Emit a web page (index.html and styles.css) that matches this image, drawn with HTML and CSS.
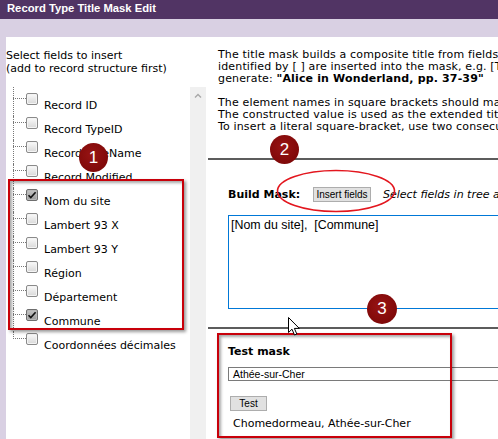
FILE: index.html
```html
<!DOCTYPE html>
<html>
<head>
<meta charset="utf-8">
<title>Record Type Title Mask Edit</title>
<link rel="stylesheet" href="styles.css">
</head>
<body>
<div class="app">
  <div class="titlebar">Record Type Title Mask Edit</div>
  <div class="band"></div>
  <div class="main">
    <div class="left">
      <p class="hint">Select fields to insert<br>(add to record structure first)</p>
      <ul class="tree">
        <li class="node"><span class="cb"></span><span class="lbl">Record ID</span></li>
        <li class="node"><span class="cb"></span><span class="lbl">Record TypeID</span></li>
        <li class="node"><span class="cb"></span><span class="lbl">Record TitleName</span></li>
        <li class="node"><span class="cb"></span><span class="lbl">Record Modified</span></li>
        <li class="node"><span class="cb checked"><svg viewBox="0 0 10 10" width="10" height="10"><path d="M1.5 5.2 L3.8 7.6 L8.6 2.2" fill="none" stroke="#111" stroke-width="1.6"/></svg></span><span class="lbl">Nom du site</span></li>
        <li class="node"><span class="cb"></span><span class="lbl">Lambert 93 X</span></li>
        <li class="node"><span class="cb"></span><span class="lbl">Lambert 93 Y</span></li>
        <li class="node"><span class="cb"></span><span class="lbl">Région</span></li>
        <li class="node"><span class="cb"></span><span class="lbl">Département</span></li>
        <li class="node"><span class="cb checked"><svg viewBox="0 0 10 10" width="10" height="10"><path d="M1.5 5.2 L3.8 7.6 L8.6 2.2" fill="none" stroke="#111" stroke-width="1.6"/></svg></span><span class="lbl">Commune</span></li>
        <li class="node last"><span class="cb"></span><span class="lbl">Coordonnées décimales</span></li>
      </ul>
    </div>
    <div class="scroll"><svg class="arrow" viewBox="0 0 8 5" width="8" height="5"><path d="M1 4.5 L4 1.5 L7 4.5" fill="none" stroke="#a8a8a8" stroke-width="1.4"/></svg></div>
    <div class="right">
      <div class="help">
        <p>The title mask builds a composite title from fields in the record. Field names<br>identified by [ ] are inserted into the mask, e.g. [Title], pp. [Start page]-[End page] will<br>generate: <b>"Alice in Wonderland, pp. 37-39"</b></p>
        <p>The element names in square brackets should match the field names in the record type.<br>The constructed value is used as the extended title of the record.<br>To insert a literal square-bracket, use two consecutive brackets [[ or ]].</p>
      </div>
      <div class="rule"></div>
      <div class="build">
        <div class="buildrow">
          <b class="buildlbl">Build Mask:</b>
          <button class="btn insert">Insert fields</button>
          <i class="tip">Select fields in tree and click Insert fields</i>
        </div>
        <div class="mask">[Nom du site],&nbsp; [Commune]</div>
      </div>
      <div class="rule"></div>
      <div class="test">
        <b class="testlbl">Test mask</b>
        <div class="testinput">Athée-sur-Cher</div>
        <button class="btn testbtn">Test</button>
        <div class="result">Chomedormeau, Athée-sur-Cher</div>
      </div>
    </div>
  </div>

  <div class="redbox box1"></div>
  <div class="redbox box3"></div>
  <svg class="ellipse" width="124" height="46" viewBox="0 0 124 46"><ellipse cx="62" cy="23" rx="58.5" ry="20.5" fill="none" stroke="#e3161e" stroke-width="1.6"/></svg>
  <div class="num n1">1</div>
  <div class="num n2">2</div>
  <div class="num n3">3</div>
  <svg class="cursor" width="13" height="20" viewBox="0 0 13 20"><path d="M0.5 0.5 L0.5 15.5 L4 12.2 L6.5 18 L8.8 17 L6.4 11.4 L11.3 11.4 Z" fill="#fff" stroke="#000" stroke-width="1" stroke-linejoin="miter"/></svg>
</div>
</body>
</html>
```

FILE: styles.css
```css
* { box-sizing: border-box; }
html, body { margin: 0; padding: 0; }
body {
  width: 498px;
  height: 439px;
  overflow: hidden;
  background: #d9d0e3;
  font-family: "DejaVu Sans", Verdana, sans-serif;
  font-size: 11px;
  color: #000;
}
.app { position: relative; width: 498px; height: 439px; overflow: hidden; }
.titlebar {
  height: 19px;
  background: #513464;
  color: #fff;
  font: bold 11.25px/16px "Liberation Sans", Arial, sans-serif;
  padding-left: 7px;
}
.band { height: 18px; }
.main {
  margin-left: 6px;
  height: 402px;
  background: #fff;
  display: flex;
}
.left { width: 184px; flex: none; }
.hint { margin: 0; padding-top: 12px; line-height: 13px; }
.tree { list-style: none; margin: 17px 0 0; padding: 0; }
.node {
  position: relative;
  height: 24px;
  display: flex;
  align-items: flex-start;
  padding-left: 20px;
}
.node::before {
  content: "";
  position: absolute;
  left: 7px;
  top: 6px;
  width: 13px;
  border-top: 1px dotted #777;
}
.node::after {
  content: "";
  position: absolute;
  left: 7px;
  top: 0;
  height: 24px;
  border-left: 1px dotted #777;
}
.node:first-child::after { top: -5px; height: 29px; }
.node.last::after { height: 7px; }
.cb {
  margin-top: 1px;
  width: 12px;
  height: 12px;
  flex: none;
  border: 1px solid #8a8a8a;
  border-radius: 2px;
  background: linear-gradient(#fafafa, #d8d8d8);
  box-shadow: inset 0 0 0 1px #f4f4f4;
  display: flex;
  align-items: center;
  justify-content: center;
}
.cb.checked {
  background: linear-gradient(#c4c4c4, #9c9c9c);
  box-shadow: inset 0 0 0 1px #b8b8b8;
  border-color: #6e6e6e;
}
.lbl { margin-left: 6px; margin-top: 7px; line-height: 13px; white-space: nowrap; }

.scroll {
  width: 16px;
  flex: none;
  margin-top: 50px;
  background: #f0f0f0;
  display: flex;
  justify-content: center;
  padding-top: 6px;
  align-items: flex-start;
}
.right {
  flex: 1;
  min-width: 0;
  overflow: hidden;
}
.help { padding: 12px 0 0 12px; white-space: nowrap; letter-spacing: 0.15px; }
.help p { margin: 0 0 12px; line-height: 12px; }
.help p:last-child { margin-bottom: 0; }
.rule { height: 2px; background: #5c5c5c; margin-left: 2px; }
.help + .rule { margin-top: 25px; }
.build { padding: 27px 0 0 22px; }
.buildrow {
  display: flex;
  align-items: center;
  height: 15px;
  white-space: nowrap;
}
.buildlbl { width: 85px; flex: none; }
.btn {
  font: 10px/13px "Liberation Sans", Arial, sans-serif;
  color: #000;
  background: #e1e1e1;
  border: 1px solid #adadad;
  border-radius: 0;
  padding: 0;
  margin: 0;
  height: 15px;
}
.insert { width: 58px; flex: none; margin-right: 12px; }
.tip { font-style: italic; }
.mask {
  margin-top: 13px;
  width: 400px;
  height: 94px;
  border: 1px solid #0078d7;
  padding: 1px 2px 0;
  font: 12.4px/16px "Liberation Sans", Arial, sans-serif;
  white-space: nowrap;
}
.build + .rule { margin-top: 18px; }
.test { padding: 17px 0 0 22px; }
.testlbl { display: block; line-height: 12px; }
.testinput {
  margin-top: 9px;
  width: 400px;
  height: 14px;
  border: 1px solid #7a7a7a;
  padding-left: 4px;
  font: 10.5px/12px "Liberation Sans", Arial, sans-serif;
}
.testbtn { display: block; margin: 15px 0 0 2px; width: 37px; }
.result { margin: 6px 0 0 5px; line-height: 13px; }

.redbox {
  position: absolute;
  border: 2px solid #c8000a;
  box-shadow: 2px 2px 3px rgba(0,0,0,0.4), inset 2px 2px 3px rgba(0,0,0,0.35);
}
.box1 { left: 8px; top: 179px; width: 176px; height: 151px; }
.box3 { left: 217px; top: 333px; width: 235px; height: 105px; }
.ellipse { position: absolute; left: 274px; top: 168px; }
.num {
  position: absolute;
  width: 29px;
  height: 29px;
  border-radius: 50%;
  background: radial-gradient(circle at 45% 40%, #981414, #760404);
  color: #fff;
  font: 17px/29px "Liberation Sans", Arial, sans-serif;
  text-align: center;
}
.n1 { left: 79px; top: 143px; }
.n2 { left: 270px; top: 135px; }
.n3 { left: 367px; top: 294px; width: 30px; height: 30px; line-height: 30px; }
.cursor { position: absolute; left: 288px; top: 317px; }
```
